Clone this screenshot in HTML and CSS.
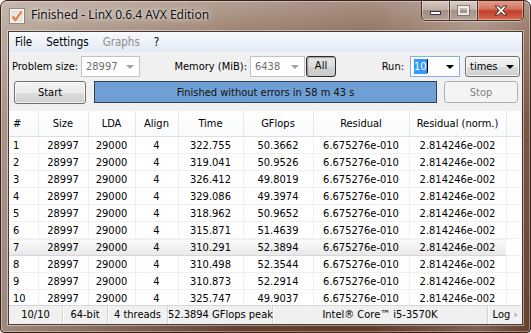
FILE: index.html
```html
<!DOCTYPE html>
<html lang="en">
  <head>
    <meta charset="UTF-8" />
    <title>LinX 0.6.4 AVX Edition</title>
    <link rel="stylesheet" href="styles.css">
  </head>
  <body>
    <div class="window">
      <div class="titlebar">
        <svg class="titlebar__icon" width="16" height="16" viewBox="0 0 16 16">
          <rect x="0.5" y="0.5" width="15" height="15" fill="#e9e4e0" stroke="#8d8682" />
          <rect x="1.5" y="1.5" width="13" height="13" fill="none" stroke="#fbf8f6" />
          <path d="M3.5 8.5 L6.5 12 L12.5 3.5" fill="none" stroke="#e8793a" stroke-width="2" />
        </svg>
        <span class="titlebar__text">Finished - LinX 0.6.4 AVX Edition</span>
        <div class="caption">
          <div class="caption__btn caption__btn--min"><span></span></div>
          <div class="caption__btn caption__btn--max"><span></span></div>
          <div class="caption__btn caption__btn--close">
            <svg width="14" height="11" viewBox="0 0 14 11">
              <path d="M1 1 H4.5 L7 3.8 L9.5 1 H13 L8.8 5.5 L13 10 H9.5 L7 7.2 L4.5 10 H1 L5.2 5.5 Z" fill="#fff" stroke="#4b2b24" stroke-width="1" stroke-linejoin="round" />
            </svg>
          </div>
        </div>
      </div>

      <div class="client">
        <div class="menubar">
          <span class="menubar__item">File</span>
          <span class="menubar__item">Settings</span>
          <span class="menubar__item menubar__item--disabled">Graphs</span>
          <span class="menubar__item">?</span>
        </div>

        <div class="params">
          <span class="params__label params__label--size">Problem size:</span>
          <div class="combo combo--disabled combo--size">
            <span>28997</span><i class="combo__arrow"></i>
          </div>
          <span class="params__label params__label--memory">Memory (MiB):</span>
          <div class="combo combo--disabled combo--memory">
            <span>6438</span><i class="combo__arrow"></i>
          </div>
          <div class="button button--pressed button--all">All</div>
          <span class="params__label params__label--run">Run:</span>
          <div class="combo combo--edit combo--run">
            <span class="combo__selection">10</span><i class="combo__caret"></i><i class="combo__arrow"></i>
          </div>
          <div class="combo combo--button combo--times">
            <span>times</span><i class="combo__arrow"></i>
          </div>
        </div>

        <div class="actions">
          <div class="button button--start">Start</div>
          <div class="progress">Finished without errors in 58 m 43 s</div>
          <div class="button button--disabled button--stop">Stop</div>
        </div>

        <div class="grid">
          <table class="results">
            <colgroup>
              <col style="width: 29px">
              <col style="width: 50px">
              <col style="width: 47px">
              <col style="width: 43px">
              <col style="width: 65px">
              <col style="width: 70px">
              <col style="width: 96px">
              <col style="width: 97px">
              <col>
            </colgroup>
            <thead>
              <tr>
                <th class="results__num">#</th>
                <th>Size</th>
                <th>LDA</th>
                <th>Align</th>
                <th>Time</th>
                <th>GFlops</th>
                <th>Residual</th>
                <th>Residual (norm.)</th>
                <th></th>
              </tr>
            </thead>
            <tbody>
              <tr><td class="results__num">1</td><td>28997</td><td>29000</td><td>4</td><td>322.755</td><td>50.3662</td><td>6.675276e-010</td><td>2.814246e-002</td><td></td></tr>
              <tr><td class="results__num">2</td><td>28997</td><td>29000</td><td>4</td><td>319.041</td><td>50.9526</td><td>6.675276e-010</td><td>2.814246e-002</td><td></td></tr>
              <tr><td class="results__num">3</td><td>28997</td><td>29000</td><td>4</td><td>326.412</td><td>49.8019</td><td>6.675276e-010</td><td>2.814246e-002</td><td></td></tr>
              <tr><td class="results__num">4</td><td>28997</td><td>29000</td><td>4</td><td>329.086</td><td>49.3974</td><td>6.675276e-010</td><td>2.814246e-002</td><td></td></tr>
              <tr><td class="results__num">5</td><td>28997</td><td>29000</td><td>4</td><td>318.962</td><td>50.9652</td><td>6.675276e-010</td><td>2.814246e-002</td><td></td></tr>
              <tr><td class="results__num">6</td><td>28997</td><td>29000</td><td>4</td><td>315.871</td><td>51.4639</td><td>6.675276e-010</td><td>2.814246e-002</td><td></td></tr>
              <tr class="results__row--hover"><td class="results__num">7</td><td>28997</td><td>29000</td><td>4</td><td>310.291</td><td>52.3894</td><td>6.675276e-010</td><td>2.814246e-002</td><td></td></tr>
              <tr><td class="results__num">8</td><td>28997</td><td>29000</td><td>4</td><td>310.498</td><td>52.3544</td><td>6.675276e-010</td><td>2.814246e-002</td><td></td></tr>
              <tr><td class="results__num">9</td><td>28997</td><td>29000</td><td>4</td><td>310.873</td><td>52.2914</td><td>6.675276e-010</td><td>2.814246e-002</td><td></td></tr>
              <tr><td class="results__num">10</td><td>28997</td><td>29000</td><td>4</td><td>325.747</td><td>49.9037</td><td>6.675276e-010</td><td>2.814246e-002</td><td></td></tr>
            </tbody>
          </table>
        </div>

        <div class="statusbar">
          <span class="statusbar__cell statusbar__cell--runs">10/10</span>
          <span class="statusbar__cell statusbar__cell--bits">64-bit</span>
          <span class="statusbar__cell statusbar__cell--threads">4 threads</span>
          <span class="statusbar__cell statusbar__cell--peak">52.3894 GFlops peak</span>
          <span class="statusbar__cell statusbar__cell--cpu">Intel® Core™ i5-3570K</span>
          <span class="statusbar__cell statusbar__cell--log">Log <b>›</b></span>
        </div>
      </div>
    </div>
  </body>
</html>
```

FILE: styles.css
```css
body {
  margin: 0;
  background-color: #ffffff;
  font-family: "DejaVu Sans Condensed", "DejaVu Sans", sans-serif;
  font-stretch: condensed;
  font-size: 11px;
  color: #000;
}

.window {
  display: flex;
  flex-direction: column;
  box-sizing: border-box;
  width: 531px;
  height: 333px;
  padding: 0 7px 7px 7px;
  border: 1px solid #3a2219;
  border-radius: 7px 7px 4px 4px;
  background:
    linear-gradient(to right, rgba(210, 200, 192, 0.55), rgba(150, 110, 90, 0.1) 45%, rgba(110, 60, 40, 0.2) 70%, rgba(200, 185, 175, 0.3) 90%, rgba(120, 80, 60, 0.2)),
    linear-gradient(to bottom, #b6a498 0, #9f8676 30px, #7a5646 120px, #5f3b2b 100%);
  box-shadow: inset 0 0 0 1px rgba(255, 255, 255, 0.35);
  overflow: hidden;
}

/* title bar */

.titlebar {
  display: flex;
  align-items: flex-start;
  height: 29px;
  margin: 0 -7px 0 -7px;
  padding-left: 8px;
}

.titlebar__icon {
  margin-top: 7px;
}

.titlebar__text {
  margin: 6px 0 0 6px;
  font-family: "Noto Sans", sans-serif;
  font-stretch: normal;
  font-size: 12px;
  line-height: 16px;
  color: #111;
  text-shadow: 0 0 8px rgba(255, 255, 255, 0.9), 0 0 3px rgba(255, 255, 255, 0.8);
}

.caption {
  display: flex;
  margin-left: auto;
  margin-right: 6px;
  margin-top: -1px;
  height: 20px;
  border: 1px solid #4a3028;
  border-top: none;
  border-radius: 0 0 5px 5px;
  overflow: hidden;
  box-shadow: 0 1px 0 rgba(255, 255, 255, 0.4);
}

.caption__btn {
  display: flex;
  align-items: center;
  justify-content: center;
  width: 27px;
  background: linear-gradient(to bottom, rgba(255, 255, 255, 0.45), rgba(255, 255, 255, 0.2) 50%, rgba(120, 90, 80, 0.2) 51%, rgba(200, 180, 170, 0.35));
  box-shadow: inset 0 0 0 1px rgba(255, 255, 255, 0.35);
}

.caption__btn--min,
.caption__btn--max {
  border-right: 1px solid #4a3028;
}

.caption__btn--min span {
  display: block;
  width: 9px;
  height: 2px;
  margin-top: 6px;
  background-color: #fff;
  border: 1px solid #3a3a48;
}

.caption__btn--max span {
  display: block;
  width: 7px;
  height: 5px;
  border: 2px solid #fff;
  outline: 1px solid #6e6a70;
  opacity: 0.75;
}

.caption__btn--close {
  width: 45px;
  background: linear-gradient(to bottom, #e3a594, #d2725e 45%, #c0402c 55%, #d76a52);
}

/* client area */

.client {
  display: flex;
  flex-direction: column;
  flex: 1;
  min-height: 0;
  margin-top: 1px;
  background-color: #f0f0f0;
  border: 1px solid #4d3b33;
  box-shadow: 0 0 0 1px rgba(255, 255, 255, 0.45);
}

.menubar {
  display: flex;
  height: 20px;
  padding-left: 0;
  background: linear-gradient(to bottom, #f7f9fd, #e3e9f4);
  line-height: 20px;
  font-size: 11.5px;
}

.menubar__item {
  padding: 0 8px 0 6px;
}

.menubar__item--disabled {
  color: #8d8d8d;
}

/* parameter row */

.params {
  display: flex;
  align-items: center;
  height: 20px;
  margin-top: 4px;
  padding-left: 3px;
  white-space: nowrap;
}

.params__label--size {
  width: 69px;
}

.params__label--memory {
  width: 107px;
  padding-right: 3px;
  text-align: right;
}

.params__label--run {
  width: 68px;
  padding-right: 6px;
  text-align: right;
}

.combo {
  position: relative;
  display: flex;
  align-items: center;
  box-sizing: border-box;
  height: 21px;
  padding-left: 4px;
  border: 1px solid #abadb3;
  background-color: #fff;
}

.combo__arrow {
  position: absolute;
  right: 5px;
  top: 8px;
  border: 4px solid transparent;
  border-top: 4px solid #000;
  border-bottom: none;
}

.combo--disabled {
  color: #6d6d6d;
  border-color: #c3c3c3;
}

.combo--disabled .combo__arrow {
  border-top-color: #a3a3a3;
}

.combo--size {
  width: 59px;
}

.combo--memory {
  width: 55px;
}

.combo--edit {
  width: 50px;
  border-color: #7eb4ea;
  padding-left: 3px;
}

.combo__selection {
  background-color: #3399ff;
  color: #fff;
  line-height: 15px;
}

.combo__caret {
  width: 1px;
  height: 14px;
  background-color: #000;
}

.combo--button {
  width: 55px;
  margin-left: 5px;
  border-color: #707070;
  border-radius: 3px;
  background: linear-gradient(to bottom, #f2f2f2, #ebebeb 50%, #dddddd 51%, #cfcfcf);
  box-shadow: inset 0 0 0 1px rgba(255, 255, 255, 0.7);
}

.button {
  display: flex;
  align-items: center;
  justify-content: center;
  box-sizing: border-box;
  border: 1px solid #707070;
  border-radius: 3px;
  background: linear-gradient(to bottom, #f2f2f2, #ebebeb 50%, #dddddd 51%, #cfcfcf);
  box-shadow: inset 0 0 0 1px rgba(255, 255, 255, 0.7);
}

.button--all {
  width: 30px;
  height: 21px;
  margin-left: 1px;
  padding-bottom: 2px;
  border-color: #2c2c2c;
  background: linear-gradient(to bottom, #e5e5e5, #dcdcdc 50%, #d0d0d0 51%, #cacaca);
  box-shadow: inset 1px 1px 1px rgba(0, 0, 0, 0.3);
}

.button--disabled {
  color: #838383;
  border-color: #adb2b5;
  background: #f4f4f4;
  box-shadow: none;
}

/* action row */

.actions {
  display: flex;
  height: 23px;
  margin-top: 5px;
  padding-left: 5px;
}

.button--start {
  width: 72px;
}

.progress {
  display: flex;
  align-items: center;
  justify-content: center;
  box-sizing: border-box;
  width: 343px;
  height: 22px;
  margin: 0 7px 0 8px;
  border: 1px solid #2f3f55;
  background-color: #6f9fd4;
  color: #111;
}

.button--stop {
  width: 74px;
  height: 22px;
}

/* results grid */

.grid {
  flex: 1;
  margin-top: 7px;
  background-color: #fff;
  overflow: hidden;
}

.results {
  width: 100%;
  table-layout: fixed;
  border-collapse: collapse;
}

.results th {
  height: 25px;
  padding: 0;
  font-weight: normal;
  text-align: center;
  background: linear-gradient(to bottom, #ffffff, #f9fafb);
  border-right: 1px solid #e3e8ee;
  border-bottom: 1px solid #e0e0e0;
}

.results td {
  height: 16px;
  padding: 0;
  text-align: center;
  white-space: nowrap;
  border-right: 1px solid #f0f0f0;
  border-bottom: 1px solid #f0f0f0;
}

.results .results__num {
  padding-left: 4px;
  text-align: left;
}

.results__row--hover td {
  background: linear-gradient(to bottom, #fafafa, #e8e8e8);
  border-top: 1px solid #dcdcdc;
  border-bottom: 1px solid #d6d6d6;
  border-right-color: transparent;
}

.results__row--hover td:last-child {
  background: #fff;
  border-top-color: #f0f0f0;
  border-bottom-color: #f0f0f0;
  border-left: 1px solid #d6d6d6;
}

/* status bar */

.statusbar {
  display: flex;
  height: 18px;
  border-top: 1px solid #d7d7d7;
  line-height: 18px;
  white-space: nowrap;
}

.statusbar__cell {
  box-sizing: border-box;
  text-align: center;
  border-right: 1px solid #d5d5d5;
  box-shadow: 1px 0 0 #ffffff;
}

.statusbar__cell--runs { width: 54px; }
.statusbar__cell--bits { width: 45px; }
.statusbar__cell--threads { width: 60px; }
.statusbar__cell--peak { width: 105px; }
.statusbar__cell--cpu { width: 215px; }

.statusbar__cell--log {
  flex: 1;
  border-right: none;
  box-shadow: none;
}

.statusbar__cell--log b {
  font-weight: normal;
  color: #6a7a90;
}
```
